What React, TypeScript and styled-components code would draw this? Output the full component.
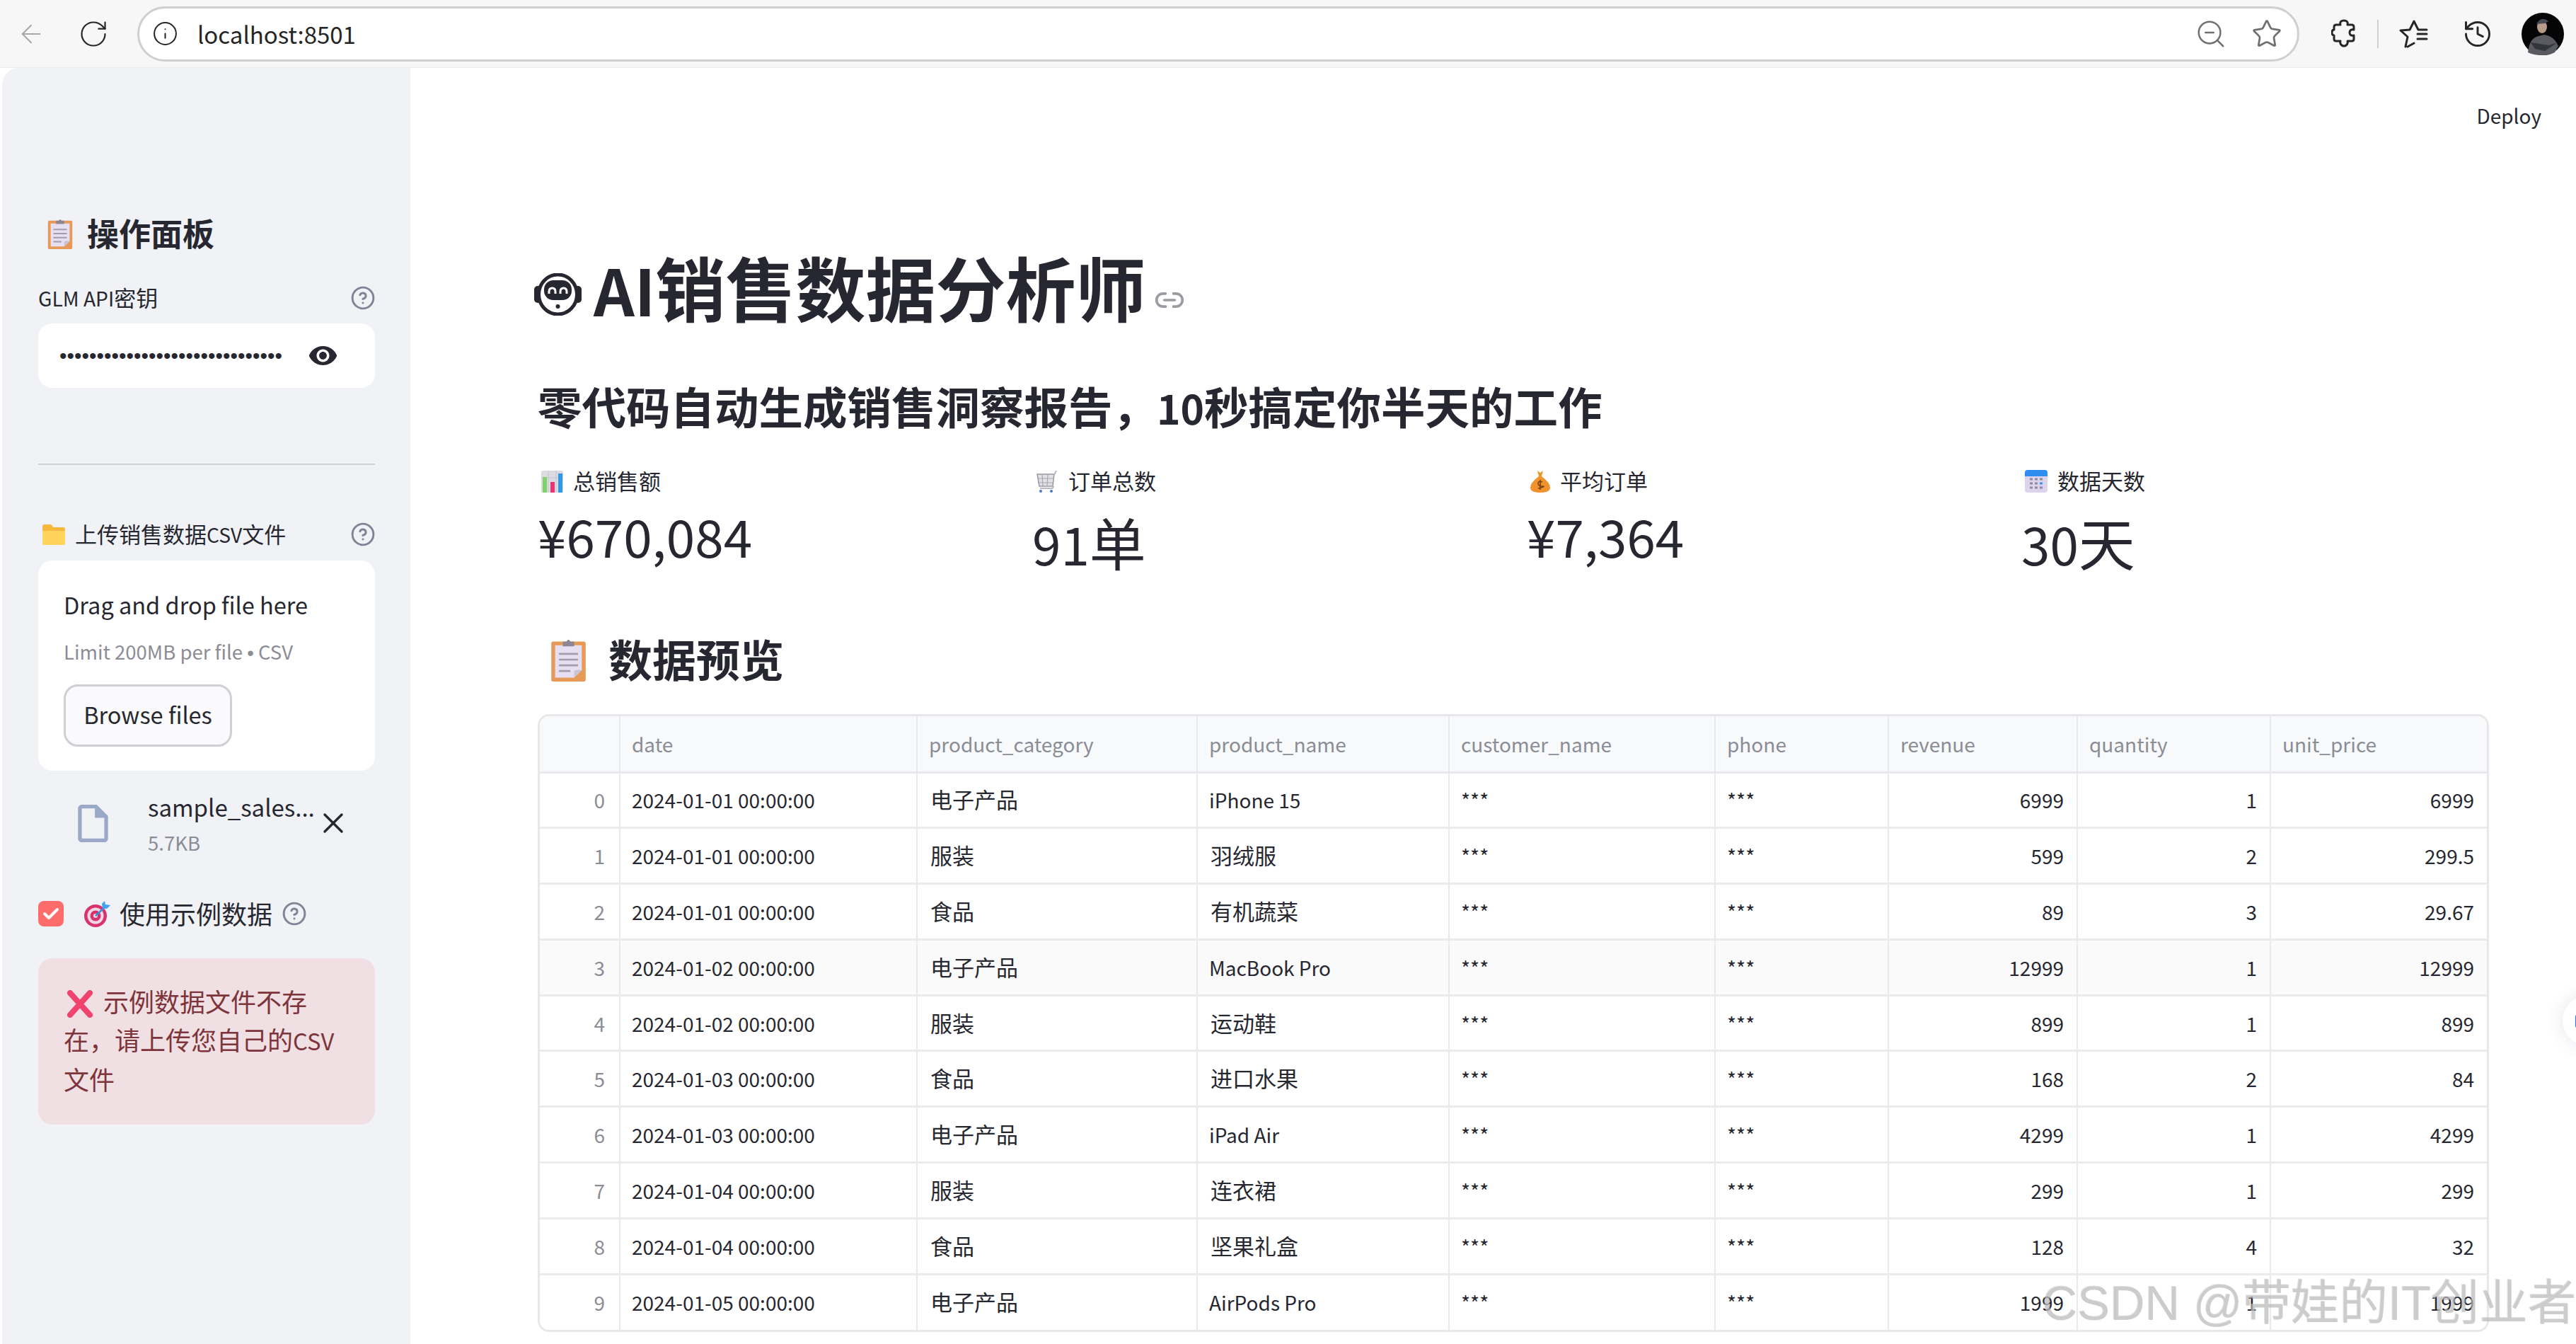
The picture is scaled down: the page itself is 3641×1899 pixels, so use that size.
import React from "react";
import styled, { createGlobalStyle } from "styled-components";
import { ArrowLeft, RotateCw, Info, ZoomOut, Star, History, Link2, X } from "lucide-react";

const GlobalStyle = createGlobalStyle`
	html, body {
		margin: 0;
		padding: 0;
		width: 3641px;
		height: 1899px;
		overflow: hidden;
		background: #fff;
	}
	* {
		box-sizing: border-box;
	}
	body {
		font-family: "Noto Sans CJK SC", "Noto Sans", sans-serif;
		color: #262730;
	}
`;

// table data, same order as the csv preview
const rows = [
	["2024-01-01 00:00:00", "电子产品", "iPhone 15", "6999", "1", "6999"],
	["2024-01-01 00:00:00", "服装", "羽绒服", "599", "2", "299.5"],
	["2024-01-01 00:00:00", "食品", "有机蔬菜", "89", "3", "29.67"],
	["2024-01-02 00:00:00", "电子产品", "MacBook Pro", "12999", "1", "12999"],
	["2024-01-02 00:00:00", "服装", "运动鞋", "899", "1", "899"],
	["2024-01-03 00:00:00", "食品", "进口水果", "168", "2", "84"],
	["2024-01-03 00:00:00", "电子产品", "iPad Air", "4299", "1", "4299"],
	["2024-01-04 00:00:00", "服装", "连衣裙", "299", "1", "299"],
	["2024-01-04 00:00:00", "食品", "坚果礼盒", "128", "4", "32"],
	["2024-01-05 00:00:00", "电子产品", "AirPods Pro", "1999", "1", "1999"],
];

const columns = [113, 420, 396, 356, 376, 245, 267, 273, 306];
const headers = ["", "date", "product_category", "product_name", "customer_name", "phone", "revenue", "quantity", "unit_price"];

const hasCjk = (text: string) => /[\u4e00-\u9fff]/.test(text);

// small drawings of the emoji in the page
const ClipboardIcon = ({ w, h }: { w: number; h: number }) => (
	<svg width={w} height={h} viewBox="0 0 36 46">
		<rect x="0" y="4" width="36" height="42" rx="2" fill="#e79a58" />
		<path d="M4 8h28v26l-8 8H4z" fill="#e6dff2" />
		<path d="M24 42l8-8h-6q-2 0-2 2z" fill="#c9c3d6" />
		<path d="M12 9V5q0-1 1-1h3q2-4 4 0h3q1 0 1 1v4z" fill="#8d8794" />
		<path d="M8 17h20M8 23h20M8 29h20M8 35h12" stroke="#a29dab" strokeWidth="2" />
	</svg>
);

const FolderIcon = () => (
	<svg width="32" height="29" viewBox="0 0 32 29">
		<path d="M0 3q0-3 3-3h8q2 0 3 2l1 2h14q3 0 3 3v19q0 3-3 3H3q-3 0-3-3z" fill="#f6b73c" />
		<path d="M0 9h32v17q0 3-3 3H3q-3 0-3-3z" fill="#ffd35c" />
	</svg>
);

const TargetIcon = () => (
	<svg width="37" height="37" viewBox="0 0 37 37">
		<circle cx="16" cy="21" r="16" fill="#d8336b" />
		<circle cx="16" cy="21" r="11.5" fill="#efd7e6" />
		<circle cx="16" cy="21" r="7.5" fill="#d8336b" />
		<circle cx="16" cy="21" r="3" fill="#efd7e6" />
		<path d="M16 21L30 8" stroke="#3d8fd8" strokeWidth="2.5" />
		<path d="M25 4l4-4 1 5 7 1-5 5-6-1z" fill="#43a4ee" />
	</svg>
);

const CrossIcon = () => (
	<svg width="36" height="39" viewBox="0 0 36 39">
		<path d="M4 4l28 31M32 4L4 35" stroke="#f0446f" strokeWidth="8" strokeLinecap="round" />
	</svg>
);

const ChartIcon = () => (
	<svg width="31" height="31" viewBox="0 0 31 31">
		<rect width="31" height="31" rx="2" fill="#dcdbe2" />
		<path d="M10 0v31M21 0v31M0 10h31" stroke="#c6c5cd" strokeWidth="1" />
		<rect x="2" y="9" width="6" height="22" fill="#7ed36b" />
		<rect x="13" y="16" width="6" height="15" fill="#e7356f" />
		<rect x="24" y="4" width="6" height="27" fill="#2f9ae8" />
	</svg>
);

const CartIcon = () => (
	<svg width="32" height="31" viewBox="0 0 32 31">
		<path d="M2 5h24l-2 17H5z" fill="#e2e1e8" stroke="#9a99a4" strokeWidth="1.5" />
		<path d="M9 5l1 17M17 5l-1 17M3 11h22M3 17h21" stroke="#a8a7b2" strokeWidth="1.2" />
		<path d="M26 6l3-6M25 22q0 3-3 3H6" stroke="#b9b8c4" strokeWidth="2" fill="none" />
		<circle cx="7" cy="29" r="2" fill="#4a78c8" />
		<circle cx="22" cy="29" r="2" fill="#4a78c8" />
	</svg>
);

const BagIcon = () => (
	<svg width="28" height="31" viewBox="0 0 28 31">
		<path d="M10 0l4 3 4-3-2 8h-4z" fill="#e69a2a" />
		<path d="M12 8h4q12 9 12 16 0 7-14 7T0 24q0-7 12-16z" fill="#f0932f" />
		<path d="M14 13v14M17 16q-6-2-6 2t6 4-6 3" stroke="#7a4210" strokeWidth="1.6" fill="none" />
	</svg>
);

const CalendarIcon = () => (
	<svg width="32" height="32" viewBox="0 0 32 32">
		<rect width="32" height="32" rx="4" fill="#dcd3ec" />
		<path d="M0 9V4q0-4 4-4h24q4 0 4 4v5z" fill="#2f8df0" />
		<path d="M7 13h4M14 13h4M21 13h4M7 19h4M14 19h4M7 25h4M14 25h4M21 25h4" stroke="#8f8b9c" strokeWidth="3" />
		<path d="M21 19h4" stroke="#2f9ae8" strokeWidth="3" />
	</svg>
);

const RobotIcon = () => (
	<RobotMark width="67" height="60" viewBox="0 0 67 60">
		<rect x="0" y="18" width="10" height="24" rx="5" fill="#262730" />
		<rect x="57" y="18" width="10" height="24" rx="5" fill="#262730" />
		<ellipse cx="33.5" cy="30" rx="27" ry="28" fill="#fff" stroke="#262730" strokeWidth="5" />
		<rect x="14" y="10" width="39" height="28" rx="13" fill="#262730" />
		<path d="M21 29v-3q0-5 4.500-5t4.500 5v3M37 29v-3q0-5 4.500-5t4.500 5v3" stroke="#fff" strokeWidth="3" fill="none" />
		<circle cx="33.5" cy="47" r="3" fill="#262730" />
	</RobotMark>
);

const HelpIcon = () => (
	<HelpMark width="34" height="34" viewBox="0 0 24 24" fill="none" stroke="#808495" strokeWidth="2.100" strokeLinecap="round">
		<circle cx="12" cy="12" r="10.500" />
		<path d="M9.090 9a3 3 0 0 1 5.830 1c0 2-3 3-3 3M12 17h.01" />
	</HelpMark>
);

const PuzzleIcon = () => (
	<svg width="36" height="42" viewBox="0 0 36 42" fill="none" stroke="#262626" strokeWidth="3" strokeLinejoin="round">
		<path d="M13 8c-1-4 1-6 5-6s6 2 5 6h6q3 0 3 3v4c-4-1-6 1-6 4s2 5 6 4v5q0 3-3 3h-6c1 3-1 7-5 7s-6-4-5-7H7q-3 0-3-3v-5c-2 0-3-2-3-4s1-4 3-4v-4q0-3 3-3z" />
	</svg>
);

const FavListIcon = () => (
	<svg width="41" height="40" viewBox="0 0 41 40" fill="none" stroke="#262626" strokeWidth="3" strokeLinecap="round" strokeLinejoin="round">
		<path d="M9 38l3-14-10-9 13-1 6-12 6 12h12M12 38l9-5" />
		<path d="M26 20h13M26 27h13" />
	</svg>
);

const Avatar = () => (
	<svg width="60" height="60" viewBox="0 0 60 60">
		<circle cx="30" cy="30" r="30" fill="#050505" />
		<path d="M9 56q2-20 15-23l8-2q14 2 20 16l-5 9q-9 5-19 4-11 0-19-4z" fill="#5a5b61" />
		<path d="M13 42l26 4 12-4-18 12-14-3z" fill="#34353a" />
		<ellipse cx="29" cy="20" rx="7" ry="9" fill="#b89a88" />
		<path d="M21 16q7-12 17-4l-5 3z" fill="#454a56" />
	</svg>
);

function App() {
	return (
		<Page>
			<GlobalStyle />
			<ChromeBar>
				<BackButton><ArrowLeft size={42} strokeWidth={1.2} color="#a8a8a8" /></BackButton>
				<ReloadButton><RotateCw size={44} strokeWidth={1.200} color="#262626" /></ReloadButton>
				<AddressBar>
					<Info size={37} strokeWidth={1.300} color="#262626" />
					<Url>localhost:8501</Url>
					<AddressActions>
						<ZoomOut size={46} strokeWidth={1.300} color="#707070" />
						<Star size={44} strokeWidth={1.500} color="#707070" />
					</AddressActions>
				</AddressBar>
				<BrowserTools>
					<PuzzleIcon />
					<ToolDivider />
					<FavListIcon />
					<HistorySlot><History size={44} strokeWidth={1.600} color="#262626" /></HistorySlot>
					<AvatarSlot><Avatar /></AvatarSlot>
				</BrowserTools>
			</ChromeBar>

			<Body>
				<Sidebar>
					<SidebarTitle>
						<ClipboardIcon w={36} h={44} />
						<LabelText>操作面板</LabelText>
					</SidebarTitle>

					<FieldLabel>
						<LabelText><Latin>GLM API</Latin>密钥</LabelText>
						<HelpIcon />
					</FieldLabel>
					<PasswordBox>
						<Dots>••••••••••••••••••••••••••••••</Dots>
						<svg width="43" height="27" viewBox="1 4.500 22 15" fill="#262730">
							<path fillRule="evenodd" d="M12 4.500C7 4.500 2.730 7.610 1 12c1.730 4.390 6 7.500 11 7.500s9.270-3.110 11-7.500c-1.730-4.390-6-7.500-11-7.500zM12 17c-2.760 0-5-2.240-5-5s2.240-5 5-5 5 2.240 5 5-2.240 5-5 5zm0-8c-1.660 0-3 1.340-3 3s1.340 3 3 3 3-1.340 3-3-1.340-3-3-3z" />
						</svg>
					</PasswordBox>

					<SideDivider />

					<UploadLabel>
						<FolderIcon />
						<UploadText>上传销售数据<Latin>CSV</Latin>文件</UploadText>
						<HelpIcon />
					</UploadLabel>
					<DropZone>
						<DropTitle>Drag and drop file here</DropTitle>
						<DropHint>Limit 200MB per file <Bullet>•</Bullet> CSV</DropHint>
						<BrowseButton>Browse files</BrowseButton>
					</DropZone>

					<FileRow>
						<svg width="43" height="53" viewBox="4 2 16 20" fill="#9aa9c7">
							<path fillRule="evenodd" d="M14 2H6c-1.100 0-2 .9-2 2v16c0 1.100.9 2 2 2h12c1.100 0 2-.9 2-2V8l-6-6zM6 20V4h7v5h5v11H6z" />
						</svg>
						<FileInfo>
							<FileName>sample_sales...</FileName>
							<FileSize>5.7KB</FileSize>
						</FileInfo>
						<RemoveSlot><X size={48} strokeWidth={1.700} color="#262730" /></RemoveSlot>
					</FileRow>

					<CheckRow>
						<CheckBox>
							<svg width="24" height="18" viewBox="0 0 24 18" fill="none" stroke="#fff" strokeWidth="4" strokeLinecap="round" strokeLinejoin="round">
								<path d="M3 9l6 6L21 3" />
							</svg>
						</CheckBox>
						<TargetIcon />
						<CheckText>使用示例数据</CheckText>
						<HelpIcon />
					</CheckRow>

					<ErrorBox>
						<ErrorMark><CrossIcon /></ErrorMark>
						示例数据文件不存<br />在，请上传您自己的<Latin>CSV</Latin><br />文件
					</ErrorBox>
				</Sidebar>

				<Main>
					<TopRow><Deploy>Deploy</Deploy></TopRow>

					<Title>
						<RobotIcon />
						<TitleText><Latin>AI</Latin>销售数据分析师</TitleText>
						<LinkSlot><Link2 size={44} strokeWidth={2} color="#9a9ba3" /></LinkSlot>
					</Title>
					<Subtitle>零代码自动生成销售洞察报告，<Latin>10</Latin>秒搞定你半天的工作</Subtitle>

					<Metrics>
						<Metric>
							<MetricLabel><ChartIcon /><LabelText>总销售额</LabelText></MetricLabel>
							<MetricValue><Latin>¥670,084</Latin></MetricValue>
						</Metric>
						<Metric>
							<MetricLabel><CartIcon /><LabelText>订单总数</LabelText></MetricLabel>
							<MetricValue $low><Latin>91</Latin>单</MetricValue>
						</Metric>
						<Metric>
							<MetricLabel><BagIcon /><LabelText>平均订单</LabelText></MetricLabel>
							<MetricValue><Latin>¥7,364</Latin></MetricValue>
						</Metric>
						<Metric>
							<MetricLabel><CalendarIcon /><LabelText>数据天数</LabelText></MetricLabel>
							<MetricValue $low><Latin>30</Latin>天</MetricValue>
						</Metric>
					</Metrics>

					<SectionTitle>
						<ClipboardIcon w={49} h={62} />
						<LabelText>数据预览</LabelText>
					</SectionTitle>

					<TableWrap>
						<Table>
							<colgroup>
								{columns.map((w, i) => <col key={i} style={{ width: w }} />)}
							</colgroup>
							<thead>
								<tr>
									{headers.map((h, i) => <HeadCell key={i}>{h}</HeadCell>)}
								</tr>
							</thead>
							<tbody>
								{rows.map((r, i) => (
									<Row key={i} $hover={i === 3}>
										<IndexCell>{i}</IndexCell>
										<Cell>{r[0]}</Cell>
										<Cell $cjk={hasCjk(r[1])}>{r[1]}</Cell>
										<Cell $cjk={hasCjk(r[2])}>{r[2]}</Cell>
										<Cell>***</Cell>
										<Cell>***</Cell>
										<NumCell>{r[3]}</NumCell>
										<NumCell>{r[4]}</NumCell>
										<NumCell>{r[5]}</NumCell>
									</Row>
								))}
							</tbody>
						</Table>
					</TableWrap>
				</Main>
			</Body>

			<ScrollBadge><BadgeDot /></ScrollBadge>
			<Watermark>CSDN @带娃的IT创业者</Watermark>
		</Page>
	);
}

const Page = styled.div`
	position: relative;
	width: 3641px;
	height: 1899px;
	overflow: hidden;
`;

// Latin glyphs of the CJK font run wide, the page text is a size smaller
const Latin = styled.span`
	font-size: 0.91em;
`;

const LabelText = styled.span`
	padding-bottom: 4px;
`;

const ChromeBar = styled.header`
	display: flex;
	align-items: center;
	height: 96px;
	padding: 0 17px 0 23px;
	background: #f7f7f7;
	border-bottom: 1px solid #ececec;
`;

const BackButton = styled.div`
	display: flex;
	width: 87px;
`;

const ReloadButton = styled.div`
	display: flex;
	width: 84px;
`;

const AddressBar = styled.div`
	display: flex;
	align-items: center;
	flex: none;
	width: 3056px;
	height: 78px;
	padding: 0 21px 0 18px;
	background: #fff;
	border: 3px solid #cfcfcf;
	border-radius: 39px;
`;

const Url = styled.span`
	margin-left: 27px;
	font-size: 33px;
	color: #262626;
`;

const AddressActions = styled.div`
	display: flex;
	align-items: center;
	gap: 34px;
	margin-left: auto;
`;

const BrowserTools = styled.div`
	display: flex;
	align-items: center;
	gap: 29px;
	margin-left: 45px;
`;

const ToolDivider = styled.div`
	width: 2px;
	height: 40px;
	background: #cfcfcf;
`;

const HistorySlot = styled.div`
	display: flex;
	margin-left: 19px;
`;

const AvatarSlot = styled.div`
	display: flex;
	margin-left: 11px;
`;

const Body = styled.div`
	display: flex;
	height: 1803px;
	padding-left: 3px;
`;

const Sidebar = styled.aside`
	flex: none;
	width: 577px;
	padding: 204px 50px 0 51px;
	background: #f0f2f6;
	border-top-left-radius: 24px;
`;

const SidebarTitle = styled.h2`
	display: flex;
	align-items: center;
	gap: 20px;
	height: 60px;
	margin: 0 0 0 13px;
	font-size: 45px;
	font-weight: 700;
`;

const FieldLabel = styled.label`
	display: flex;
	align-items: center;
	justify-content: space-between;
	height: 40px;
	margin-top: 41px;
	font-size: 31px;
`;

const HelpMark = styled.svg`
	flex: none;
`;

const PasswordBox = styled.div`
	display: flex;
	align-items: center;
	height: 91px;
	margin-top: 16px;
	padding: 0 52px 0 30px;
	background: #fff;
	border-radius: 20px;
`;

const Dots = styled.span`
	flex: 1;
	font-family: "Liberation Sans", sans-serif;
	font-size: 30px;
	line-height: 1;
	white-space: nowrap;
`;

const SideDivider = styled.hr`
	height: 2px;
	margin: 107px 0 0;
	border: 0;
	background: #cfd0d6;
`;

const UploadLabel = styled.div`
	display: flex;
	align-items: center;
	height: 40px;
	margin-top: 78px;
	padding-left: 6px;
	font-size: 31px;
`;

const UploadText = styled.span`
	flex: 1;
	margin-left: 14px;
	padding-bottom: 4px;
`;

const DropZone = styled.section`
	height: 297px;
	margin-top: 17px;
	padding: 39px 36px 0;
	background: #fff;
	border-radius: 20px;
`;

const DropTitle = styled.div`
	font-size: 32.5px;
	line-height: 46px;
`;

const DropHint = styled.div`
	margin-top: 23px;
	font-size: 27.5px;
	line-height: 40px;
	color: #8b8d96;
`;

const Bullet = styled.span`
	font-family: "Liberation Sans", sans-serif;
`;

const BrowseButton = styled.button`
	display: block;
	width: 238px;
	height: 88px;
	margin: 24px 0 0;
	padding: 0 0 5px;
	background: #fafafc;
	border: 3px solid #cfd0d6;
	border-radius: 20px;
	font-family: inherit;
	font-size: 32.5px;
	color: #262730;
`;

const FileRow = styled.div`
	display: flex;
	align-items: center;
	height: 94px;
	margin-top: 27px;
	padding-left: 56px;
`;

const FileInfo = styled.div`
	width: 250px;
	margin-left: 56px;
`;

const FileName = styled.div`
	font-size: 33px;
	line-height: 48px;
	white-space: nowrap;
`;

const FileSize = styled.div`
	margin-top: 6px;
	font-size: 27.5px;
	line-height: 40px;
	color: #8b8d96;
`;

const RemoveSlot = styled.div`
	display: flex;
	margin-left: -12px;
`;

const CheckRow = styled.label`
	display: flex;
	align-items: center;
	height: 40px;
	margin-top: 61px;
`;

const CheckBox = styled.span`
	display: flex;
	align-items: center;
	justify-content: center;
	width: 36px;
	height: 36px;
	margin-right: 29px;
	background: #ff6c6c;
	border-radius: 8px;
`;

const CheckText = styled.span`
	margin: 0 14px 0 13px;
	padding-bottom: 2px;
	font-size: 36px;
`;

const ErrorBox = styled.div`
	height: 235px;
	margin-top: 43px;
	padding: 33px 36px;
	background: #f1e0e3;
	border-radius: 20px;
	font-size: 36px;
	line-height: 54px;
	color: #7d353b;
`;

const ErrorMark = styled.span`
	display: inline-block;
	margin: 0 15px 0 5px;
	line-height: 0;
	vertical-align: -8px;
`;

const Main = styled.main`
	flex: 1;
	min-width: 0;
	padding: 0 124px 0 180px;
`;

const TopRow = styled.div`
	display: flex;
	align-items: center;
	justify-content: flex-end;
	height: 134px;
	margin-right: -75px;
`;

const Deploy = styled.span`
	font-size: 28px;
`;

const Title = styled.h1`
	display: flex;
	align-items: center;
	height: 120px;
	margin: 116px 0 0 -5px;
	font-size: 99px;
	font-weight: 700;
	line-height: 120px;
`;

const RobotMark = styled.svg`
	flex: none;
	margin-top: 20px;
`;

const TitleText = styled.span`
	margin: 0 12px 0 17px;
`;

const LinkSlot = styled.span`
	display: flex;
	padding-top: 36px;
`;

const Subtitle = styled.h2`
	height: 80px;
	margin: 67px 0 0;
	font-size: 62.5px;
	font-weight: 700;
	line-height: 80px;
	white-space: nowrap;
`;

const Metrics = styled.section`
	display: grid;
	grid-template-columns: repeat(3, 699px) 1fr;
	margin-top: 47px;
`;

const Metric = styled.div`
	display: flex;
	flex-direction: column;
`;

const MetricLabel = styled.div`
	display: flex;
	align-items: center;
	gap: 14px;
	height: 40px;
	padding-left: 5px;
	font-size: 31px;
`;

const MetricValue = styled.div<{ $low?: boolean }>`
	height: 100px;
	margin-top: 3px;
	padding-top: ${(p) => (p.$low ? "11px" : "0")};
	font-size: 80px;
	line-height: 100px;
`;

const SectionTitle = styled.h2`
	display: flex;
	align-items: center;
	gap: 32px;
	height: 80px;
	margin: 89px 0 0 19px;
	font-size: 62px;
	font-weight: 700;
`;

const TableWrap = styled.div`
	width: 2758px;
	margin-top: 37px;
	border: 3px solid #e8e8ea;
	border-radius: 16px;
	overflow: hidden;
`;

const Table = styled.table`
	width: 100%;
	table-layout: fixed;
	border-collapse: collapse;
	font-size: 28px;
`;

const HeadCell = styled.th`
	height: 79px;
	padding: 0 16px;
	background: #f8f9fb;
	border-left: 2px solid #e8e9ec;
	border-bottom: 3px solid #e8e9ec;
	font-weight: 400;
	text-align: left;
	color: #8b8d96;
	&:first-child {
		border-left: 0;
	}
`;

const Row = styled.tr<{ $hover?: boolean }>`
	background: ${(p) => (p.$hover ? "#fafafa" : "#fff")};
	&:not(:last-child) td {
		border-bottom: 3px solid #ebebeb;
	}
`;

const Cell = styled.td<{ $cjk?: boolean }>`
	height: 78.800px;
	padding: ${(p) => (p.$cjk ? "0 16px 3px 18px" : "0 16px")};
	border-left: 2px solid #e8e9ec;
	font-size: ${(p) => (p.$cjk ? "31px" : "28px")};
	white-space: nowrap;
	overflow: hidden;
`;

const IndexCell = styled(Cell)`
	padding-right: 20px;
	border-left: 0;
	text-align: right;
	color: #8b8d96;
`;

const NumCell = styled(Cell)`
	padding-right: 18px;
	text-align: right;
`;

const ScrollBadge = styled.div`
	position: absolute;
	top: 1407px;
	left: 3622px;
	width: 70px;
	height: 70px;
	background: #fff;
	border-radius: 50%;
	box-shadow: 0 0 24px rgba(60, 70, 110, 0.14);
`;

const BadgeDot = styled.span`
	position: absolute;
	top: 24px;
	left: 18px;
	width: 12px;
	height: 24px;
	background: #2f6fe0;
	border-radius: 6px;
`;

const Watermark = styled.div`
	position: absolute;
	top: 1796px;
	left: 2886px;
	font-family: "Liberation Sans", "Noto Sans CJK SC", sans-serif;
	font-size: 68.5px;
	line-height: 90px;
	white-space: nowrap;
	color: rgba(200, 200, 200, 0.55);
	text-shadow: 1px 1px 0 rgba(150, 150, 150, 0.45);
`;

export default App;
